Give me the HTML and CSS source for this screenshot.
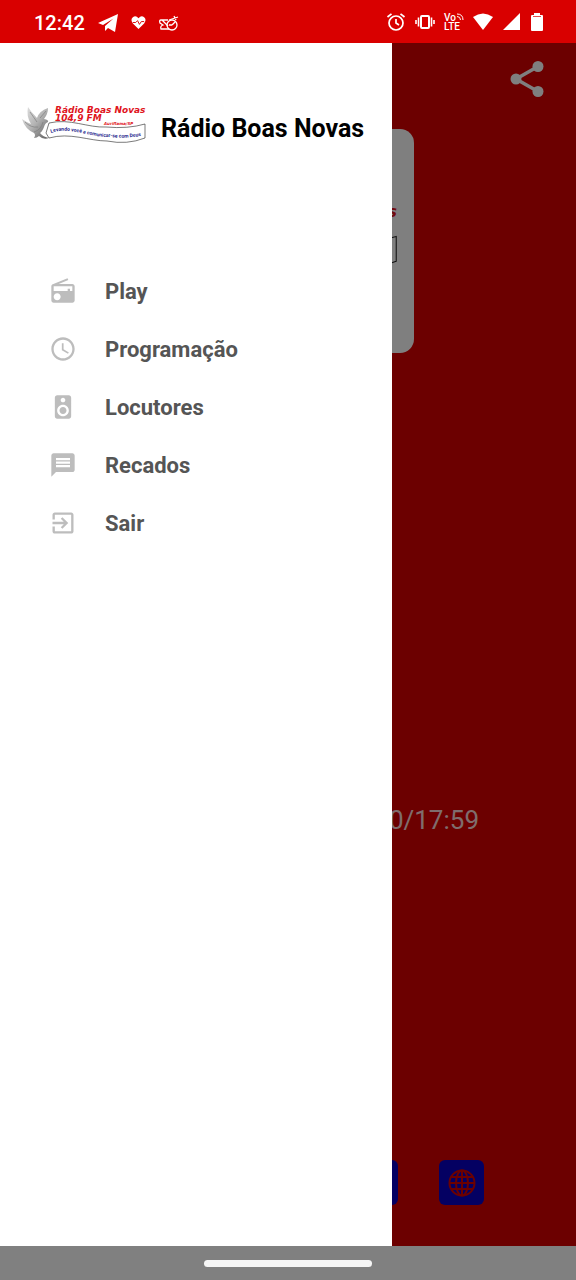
FILE: index.html
```html
<!DOCTYPE html>
<html lang="pt-BR">
<head>
<meta charset="utf-8">
<meta name="viewport" content="width=device-width, initial-scale=1">
<title>Rádio Boas Novas</title>
<link rel="stylesheet" href="styles.css">
</head>
<body>
<svg class="defs" width="0" height="0" aria-hidden="true">
  <defs>
    <linearGradient id="wing" x1="0" y1="0" x2="1" y2="1">
      <stop offset="0" stop-color="#e8e8e8"/>
      <stop offset=".5" stop-color="#b4b4b4"/>
      <stop offset="1" stop-color="#5c5c5c"/>
    </linearGradient>
    <path id="wave" d="M29 29 C48 22 70 34 88 33 Q106 35 123 31"/>
    <symbol id="logo" viewBox="0 0 124 40">
      <path fill="url(#wing)" d="M0 15 Q4 18 9 20 Q4 12 6 3 Q9 8 15 14 Q17 7 26 4 Q26 10 22 15 Q27 16 26 18 Q23 19 22 23 Q20 28 18 29 Q21 33 27 34 Q21 36 17 32 Q15 34 12 34 Q14 31 12 29 Q3 25 0 15Z"/>
      <path fill="none" stroke="#808080" stroke-width=".7" d="M8 8 L15 18 M3 18 Q9 24 16 23 M12 28 Q19 26 21 18 M18 14 L24 7"/>
      <path fill="#fff" stroke="#222" stroke-width=".6" d="M27 19 C48 14 66 24 84 23 Q106 25 123 20 V34 Q105 41 85 37 C67 37 48 28 27 34 L24 29Z"/>
      <text class="logo-name" x="33" y="9">Rádio Boas Novas</text>
      <text class="logo-name" x="33" y="17">104,9 FM</text>
      <text class="logo-city" x="82" y="21">Auriflama/SP</text>
      <text class="logo-motto"><textPath href="#wave">Levando você a comunicar-se com Deus</textPath></text>
    </symbol>
  </defs>
</svg>
<div class="phone">
  <header class="status">
    <div class="status-group">
      <time class="clock">12:42</time>
      <svg class="s-icon" viewBox="0 0 20 20"><path fill="#fff" d="M0 10 20 1 17 19 10 15 7 18 V13 L15.500 5.500 5 12Z"/></svg>
      <svg class="s-icon heart" viewBox="0 0 16 16"><path fill="#fff" d="M8 15 2 9 Q-1 5 2 2.500 Q5 0 8 3.500 Q11 0 14 2.500 Q17 5 14 9Z"/><path fill="none" stroke="#d90000" d="M2 8 H5 L7 6 9 10 11 7 H14"/></svg>
      <svg class="s-icon" viewBox="0 0 20 20"><g fill="none" stroke="#fff" stroke-width="1.300"><circle cx="13" cy="12" r="5"/><path d="M9 7 H2 Q0 7 1 10 L4 12 Q1 13 2 16 H10 M3 7 L9 13 M10 7 L19 4 M15 3 L17 7 M13 12 L16 9 M13 12 H10"/></g></svg>
    </div>
    <div class="status-group right">
      <svg class="s-icon" viewBox="0 0 20 20"><g fill="none" stroke="#fff" stroke-width="1.700"><circle cx="10" cy="11" r="7"/><path d="M10 7 V11 L13 13 M1.500 5 L5.500 1.800 M18.500 5 L14.500 1.800"/></g></svg>
      <svg class="s-icon" viewBox="0 0 20 20"><g fill="none" stroke="#fff"><rect x="6" y="4" width="8" height="12" rx="1" stroke-width="2"/><path stroke-width="1.600" d="M3.500 5.500 V14.500 M16.500 5.500 V14.500 M1 8 V12 M19 8 V12"/></g></svg>
      <div class="volte"><span>Vo<svg class="waves" viewBox="0 0 8 7"><path fill="none" stroke="#fff" d="M1 1 Q7 1 7 7 M1 3.500 Q4.500 3.500 4.500 7"/></svg></span><span>LTE</span></div>
      <svg class="s-icon" viewBox="0 0 20 20"><path fill="#fff" d="M0 5 Q10 -2 20 5 L10 18Z"/></svg>
      <svg class="s-icon" viewBox="0 0 20 20"><path fill="#fff" d="M1 18 H18 V1Z"/></svg>
      <svg class="s-icon battery" viewBox="0 0 12 20"><path fill="#fff" d="M3 1 H9 V3 H11 Q12 3 12 4 V18 Q12 19 11 19 H1 Q0 19 0 18 V4 Q0 3 1 3 H3Z"/><path fill="#d90000" opacity=".7" d="M2 4 H10 V5 H2Z"/></svg>
    </div>
  </header>

  <main class="stage">
    <section class="player">
      <div class="toolbar">
        <button class="share" type="button" aria-label="Compartilhar">
          <svg viewBox="0 0 34 36"><g fill="#fff"><circle cx="6" cy="18" r="5.500"/><circle cx="28" cy="5.500" r="5.500"/><circle cx="28" cy="30.500" r="5.500"/></g><path fill="none" stroke="#fff" stroke-width="3.500" d="M28 5.500 L6 18 L28 30.500"/></svg>
        </button>
      </div>
      <div class="cover"><svg class="cover-logo"><use href="#logo"/></svg></div>
      <p class="elapsed">0/17:59</p>
      <nav class="links">
        <a class="link" href="#" aria-label="Rede social"></a>
        <a class="link" href="#" aria-label="Site">
          <svg viewBox="0 0 28 28"><g fill="none" stroke="#d80000" stroke-width="2"><circle cx="14" cy="14" r="12.500"/><ellipse cx="14" cy="14" rx="6" ry="12.500"/><path d="M14 1.500 V26.500 M1.500 14 H26.500 M3.500 8 H24.500 M3.500 20 H24.500"/></g></svg>
        </a>
      </nav>
    </section>
    <div class="scrim"></div>
    <aside class="drawer">
      <div class="brand">
        <svg class="brand-logo"><use href="#logo"/></svg>
        <h1 class="brand-name">Rádio Boas Novas</h1>
      </div>
      <nav class="menu">
        <a class="item" href="#"><svg class="icon" viewBox="0 0 24 24"><path d="M3.240 6.150C2.510 6.430 2 7.170 2 8v12c0 1.100.89 2 2 2h16c1.110 0 2-.9 2-2V8c0-1.110-.89-2-2-2H8.300l8.260-3.340L15.880 1 3.240 6.150zM7 20c-1.660 0-3-1.340-3-3s1.340-3 3-3 3 1.340 3 3-1.340 3-3 3zm13-8h-2v-2h-2v2H4V8h16v4z"/></svg>Play</a>
        <a class="item" href="#"><svg class="icon" viewBox="0 0 24 24"><path d="M11.990 2C6.470 2 2 6.480 2 12s4.470 10 9.990 10C17.520 22 22 17.520 22 12S17.520 2 11.990 2zM12 20c-4.420 0-8-3.580-8-8s3.580-8 8-8 8 3.580 8 8-3.580 8-8 8zm.5-13H11v6l5.250 3.150.75-1.230-4.500-2.670z"/></svg>Programação</a>
        <a class="item" href="#"><svg class="icon" viewBox="0 0 24 24"><path d="M17 2H7c-1.100 0-2 .9-2 2v16c0 1.100.9 1.990 2 1.990L17 22c1.100 0 2-.9 2-2V4c0-1.100-.9-2-2-2zm-5 2c1.100 0 2 .9 2 2s-.9 2-2 2c-1.110 0-2-.9-2-2s.89-2 2-2zm0 16c-2.760 0-5-2.240-5-5s2.240-5 5-5 5 2.240 5 5-2.240 5-5 5zm0-8c-1.660 0-3 1.340-3 3s1.340 3 3 3 3-1.340 3-3-1.340-3-3-3z"/></svg>Locutores</a>
        <a class="item" href="#"><svg class="icon" viewBox="0 0 24 24"><path d="M20 2H4c-1.100 0-1.990.9-1.990 2L2 22l4-4h14c1.100 0 2-.9 2-2V4c0-1.100-.9-2-2-2zm-2 12H6v-2h12v2zm0-3H6V9h12v2zm0-3H6V6h12v2z"/></svg>Recados</a>
        <a class="item" href="#"><svg class="icon" viewBox="0 0 24 24"><path d="M10.090 15.590L11.500 17l5-5-5-5-1.410 1.410L12.670 11H3v2h9.670l-2.580 2.590zM19 3H5c-1.110 0-2 .9-2 2v4h2V5h14v14H5v-4H3v4c0 1.100.89 2 2 2h14c1.100 0 2-.9 2-2V5c0-1.100-.9-2-2-2z"/></svg>Sair</a>
      </nav>
    </aside>
  </main>

  <footer class="gesture"><div class="pill"></div></footer>
</div>
</body>
</html>
```
FILE: styles.css
```css
* { box-sizing: border-box; }
body { margin: 0; font-family: Roboto, "Liberation Sans", sans-serif; }
svg { display: block; flex: none; }
.defs { position: absolute; }
.phone { display: flex; flex-direction: column; min-height: 100vh; }

.status {
  display: flex; justify-content: space-between; align-items: center;
  height: 43px; padding: 2px 33px 0 34px;
  background: #d90000; color: #fff;
}
.status-group { display: flex; align-items: center; gap: 13px; }
.status-group.right { gap: 9px; padding-bottom: 2px; }
.clock { font-size: 20px; font-weight: 500; line-height: 24px; }
.s-icon { width: 20px; height: 20px; }
.heart { width: 15px; height: 15px; }
.battery { width: 12px; }
.volte { display: flex; flex-direction: column; font-size: 10px; font-weight: 500; line-height: 9px; }
.volte span { display: flex; }
.waves { width: 8px; height: 7px; }

.stage { position: relative; flex: 1; display: flex; background: #d80000; }
.player { flex: 1; display: flex; flex-direction: column; }
.toolbar { display: flex; justify-content: flex-end; height: 86px; padding: 18px 32px; }
.share { width: 34px; height: 36px; padding: 0; border: 0; background: none; }
.share svg { width: 34px; height: 36px; }
.cover {
  align-self: center; width: 252px; height: 224px; padding: 72px 16px 0;
  border-radius: 14px; background: #fff;
}
.cover-logo { width: 220px; height: 71px; }
.elapsed {
  margin: auto 97px 324px; text-align: right;
  color: #ffdada; font-size: 26px; line-height: 32px;
}
.links { display: flex; justify-content: flex-end; gap: 41px; padding: 0 92px 41px; }
.link {
  display: grid; place-items: center; width: 45px; height: 45px;
  border-radius: 6px; background: #0800c4;
}
.link svg { width: 28px; height: 28px; }

.scrim { position: absolute; inset: 0; background: rgba(0, 0, 0, .5); }
.drawer { position: absolute; inset: 0 auto 0 0; width: 68%; background: #fff; }
.brand { display: flex; align-items: flex-end; gap: 15px; height: 101px; padding-left: 22px; }
.brand-logo { width: 124px; height: 40px; }
.brand-name { margin: 0; color: #000; font-size: 25px; font-weight: 700; line-height: 30px; white-space: nowrap; }
.logo-name { fill: #e0141c; font: italic 700 9px "DejaVu Sans", sans-serif; }
.logo-city { fill: #e0141c; font: italic 700 4px "DejaVu Sans", sans-serif; }
.logo-motto { fill: #25258c; font: 700 5px Roboto, sans-serif; }
.menu { padding: 118px 0 0 49px; }
.item {
  display: flex; align-items: center; gap: 28px; height: 58px;
  color: #555; font-size: 22px; font-weight: 700; text-decoration: none;
}
.icon { width: 28px; height: 28px; fill: #bdbdbd; }

.gesture { display: grid; place-items: center; height: 34px; background: #808080; }
.pill { width: 168px; height: 7px; border-radius: 4px; background: #f5f5f5; }
```
